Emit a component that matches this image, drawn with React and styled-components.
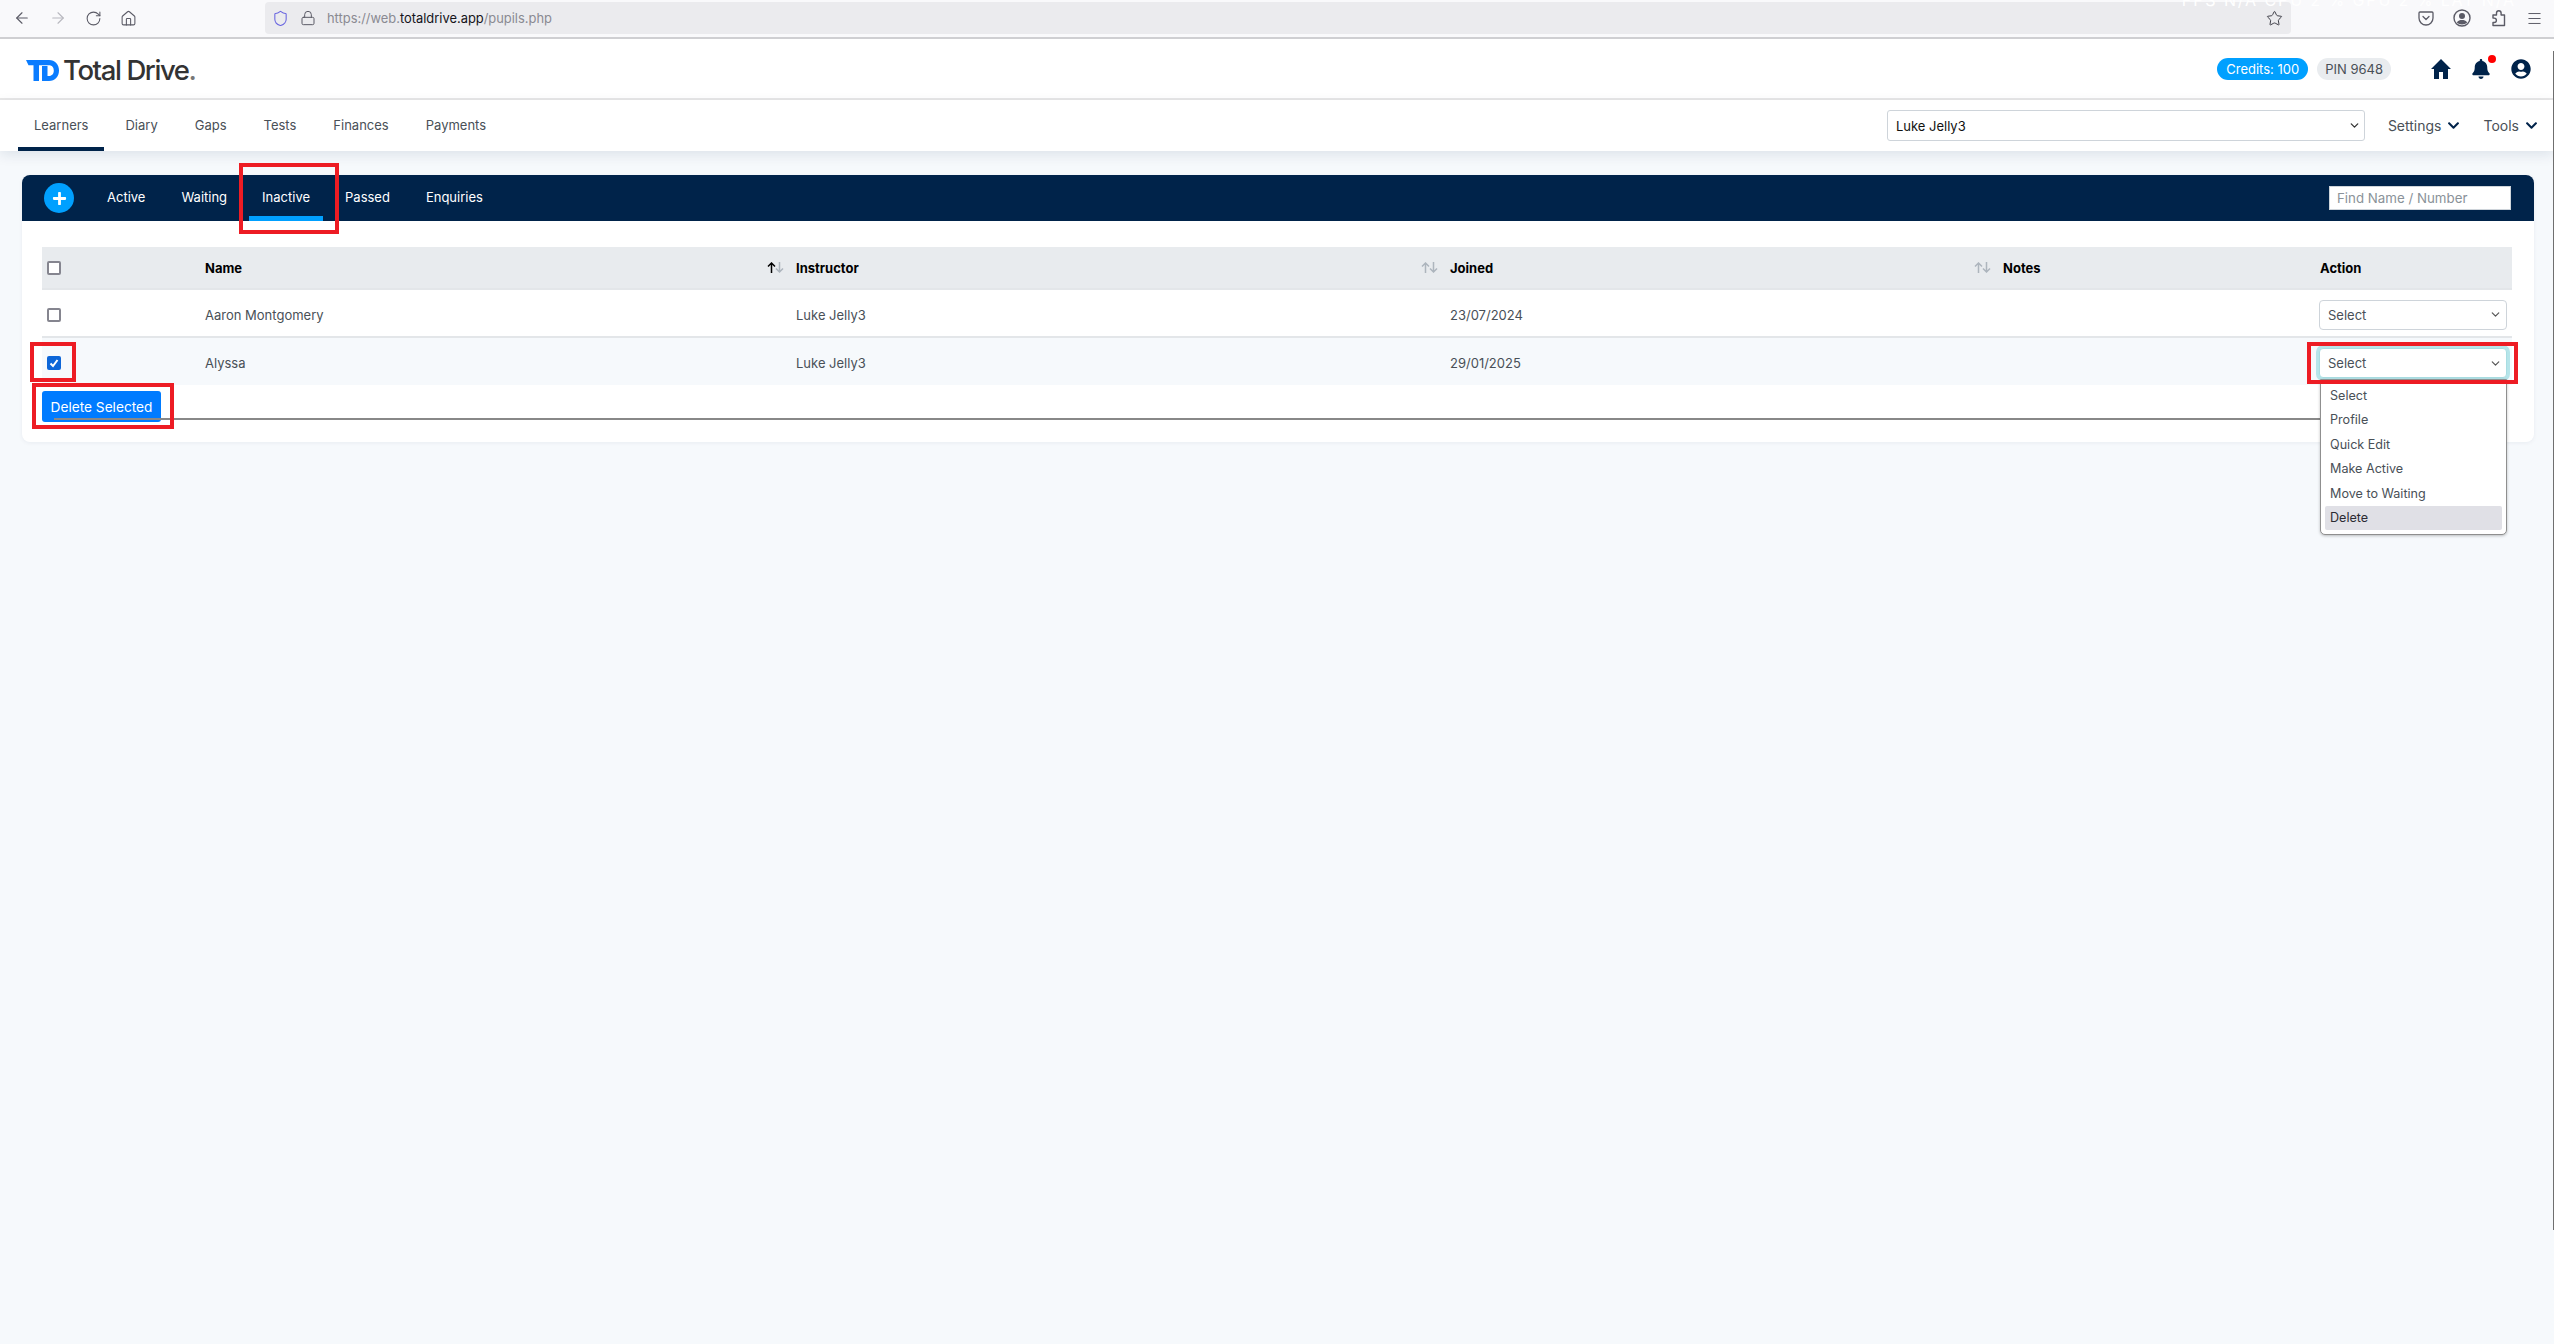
import React from "react";
import styled, { createGlobalStyle } from "styled-components";
import { ArrowLeft, ArrowRight, RotateCw, House, Shield, Lock, Star, Menu, ChevronDown } from "lucide-react";
import { FaBell, FaUserCircle, FaChevronDown, FaPlus } from "react-icons/fa";

const navy = "#00234a";
const sky = "#00a0ff";

const GlobalStyle = createGlobalStyle`
  html, body {
    margin: 0;
    height: 100%;
    overflow: hidden;
    background: #f6f9fc;
    font-family: Inter, "Noto Sans", sans-serif;
    font-size: 13px;
    color: #495057;
  }
  * { box-sizing: border-box; }
`;

const Page = styled.div`
  position: relative;
  height: 1344px;
  overflow: hidden;
`;

// Browser chrome
const BrowserBar = styled.div`
  position: relative;
  height: 39px;
  background: #f9f9fb;
  border-bottom: 2px solid #cfcfd2;
  display: flex;
  align-items: center;
  padding: 0 14px 1px 13px;
  color: #5b5b66;
`;

const BrowserButtons = styled.div`
  display: flex;
  align-items: center;
  gap: 18px;
  width: 252px;
  flex: none;
`;

const UrlBar = styled.div`
  width: 2026px;
  height: 32px;
  background: #ebebee;
  border-radius: 4px;
  display: flex;
  align-items: center;
  padding: 0 8px 0 7px;
  gap: 11px;
  flex: none;
`;

const UrlText = styled.div`
  flex: 1;
  font-size: 12.9px;
  color: #8a8a92;
  b { font-weight: 400; color: #15141a; }
`;

const BrowserTools = styled.div`
  display: flex;
  align-items: center;
  margin-left: 127px;
  gap: 19px;
`;

const HudText = styled.div`
  position: absolute;
  top: -10px;
  right: 38px;
  font-size: 16px;
  letter-spacing: 1.9px;
  color: #ffffff;
  white-space: nowrap;
`;

const ScrollEdge = styled.div`
  position: absolute;
  top: 51px;
  right: 0;
  height: 1179px;
  width: 1px;
  background: #6f6f6f;
`;

// App header
const TopBar = styled.header`
  height: 61px;
  background: #fff;
  border-bottom: 2px solid #e8e8e8;
  display: flex;
  align-items: center;
  padding: 0 23px 0 26px;
`;

const Logo = styled.div`
  display: flex;
  align-items: center;
  gap: 4px;
  padding-top: 4px;
`;

const LogoText = styled.span`
  font-size: 27.5px;
  line-height: 1;
  font-weight: 500;
  letter-spacing: -1.4px;
  color: #333;
  i { font-style: normal; color: #777; }
`;

const TopRight = styled.div`
  margin-left: auto;
  display: flex;
  align-items: center;
`;

const Pill = styled.span`
  height: 22px;
  padding: 0 ${p => p.$pad}px;
  border-radius: 11px;
  font-size: 13px;
  line-height: 22px;
  margin-right: ${p => (p.$primary ? 9 : 10)}px;
  background: ${p => (p.$primary ? sky : "#e9ecef")};
  color: ${p => (p.$primary ? "#fff" : "#495057")};
`;

const IconLink = styled.span`
  position: relative;
  display: flex;
  color: ${navy};
  font-size: ${p => p.$size || 20}px;
  margin-left: ${p => p.$gap}px;
`;

const RedDot = styled.span`
  position: absolute;
  top: -4px;
  right: -5px;
  width: 8px;
  height: 8px;
  border-radius: 50%;
  background: #f00;
`;

// Main nav
const NavBar = styled.nav`
  position: relative;
  height: 51px;
  background: #fff;
  box-shadow: 0 4px 12px rgba(0, 35, 74, 0.1);
  display: flex;
  align-items: stretch;
  padding: 0 16px 0 18px;
`;

const NavTab = styled.a`
  display: flex;
  align-items: center;
  padding: 3px 16px 0;
  margin-right: 5px;
  font-size: 13px;
  color: #495057;
  border-bottom: 4px solid ${p => (p.$active ? navy : "transparent")};
`;

const PupilSelect = styled.div`
  width: 478px;
  height: 31px;
  margin: 10px 0 0 auto;
  border: 1px solid #ced4da;
  border-radius: 3px;
  display: flex;
  align-items: center;
  justify-content: space-between;
  padding: 0 3px 0 8px;
  color: #111;
  font-size: 13px;
`;

const NavMenu = styled.a`
  display: flex;
  align-items: center;
  gap: 6px;
  height: 50px;
  margin-left: ${p => p.$gap}px;
  font-size: 14px;
  color: #495057;
  svg { color: ${navy}; }
`;

// Content
const Content = styled.main`
  padding: 24px 20px 0 22px;
`;

const Card = styled.section`
  background: #fff;
  border-radius: 8px;
  box-shadow: 0 1px 4px rgba(0, 35, 74, 0.06);
`;

const TabBar = styled.div`
  height: 46px;
  background: ${navy};
  border-radius: 8px 8px 0 0;
  display: flex;
  align-items: stretch;
  padding: 0 23px 0 22px;
`;

const AddButton = styled.span`
  width: 30px;
  height: 30px;
  margin: 8px 20px 0 0;
  border-radius: 50%;
  background: ${sky};
  color: #fff;
  display: flex;
  align-items: center;
  justify-content: center;
  font-size: 15px;
`;

const SubTab = styled.a`
  position: relative;
  display: flex;
  align-items: center;
  padding: 3px 13px 0;
  margin-right: ${p => p.$mr || 9}px;
  font-size: 13px;
  color: #fff;
  border-bottom: 5px solid ${p => (p.$active ? sky : "transparent")};
`;

const SearchBox = styled.div`
  width: 182px;
  height: 24px;
  margin: 11px 0 0 auto;
  background: #fff;
  border: 1px solid #ced4da;
  padding: 0 7px;
  font-size: 13.3px;
  line-height: 22px;
  color: #8a9299;
`;

const TableWrap = styled.div`
  padding: 26px 22px 20px 20px;
`;

const Row = styled.div`
  display: grid;
  grid-template-columns: 163px 591px 654px 553px 317px 192px;
  align-items: center;
  height: ${p => p.$h}px;
  padding-top: ${p => (p.$head ? 0 : 3)}px;
  background: ${p => p.$bg || "#fff"};
  border-bottom: ${p => (p.$flat ? "0" : "2px solid #e3e6e9")};
  font-weight: ${p => (p.$head ? 700 : 400)};
  color: ${p => (p.$head ? "#000" : "#495057")};
`;

const Cell = styled.div`
  position: relative;
  display: flex;
  align-items: center;
  justify-content: space-between;
  height: 100%;
  padding-left: ${p => p.$pl || 0}px;
  padding-right: 12px;
`;

const SortIcon = styled.svg`
  width: 17px;
  height: 11px;
  flex: none;
`;

const Check = styled.span`
  width: 14px;
  height: 14px;
  border-radius: 2px;
  display: flex;
  align-items: center;
  justify-content: center;
  border: ${p => (p.$on ? "0" : "2px solid #85858f")};
  background: ${p => (p.$on ? "#0d66d8" : "#fff")};
`;

const ActionSelect = styled.div`
  position: relative;
  flex: none;
  width: 188px;
  height: 30px;
  margin-left: -1px;
  border: 1px solid ${p => (p.$open ? "#a9dde2" : "#ced4da")};
  border-radius: 4px;
  background: #fff;
  display: flex;
  align-items: center;
  justify-content: space-between;
  padding: 0 4px 0 8px;
  box-shadow: ${p => (p.$open ? "0 0 0 3px #b6e5ea" : "none")};
  color: #495057;
  font-size: 13px;
`;

const Dropdown = styled.ul`
  position: absolute;
  z-index: 3;
  top: 30px;
  left: 0;
  width: 187px;
  height: 156px;
  margin: 0;
  padding: 4px;
  list-style: none;
  background: #fff;
  border: 1px solid #8f8f8f;
  border-radius: 0 0 5px 5px;
  box-shadow: 0 1px 3px rgba(0, 0, 0, 0.25);
`;

const DropItem = styled.li`
  height: 24.4px;
  line-height: 24px;
  padding-left: 5px;
  border-radius: 2px;
  font-size: 12.6px;
  background: ${p => (p.$hover ? "#e0e0e6" : "transparent")};
  color: ${p => (p.$hover ? "#2b2b33" : "#495057")};
`;

const Footer = styled.div`
  position: relative;
  height: 37px;
  padding-top: 6px;
`;

const DeleteButton = styled.button`
  position: relative;
  display: block;
  width: 119px;
  height: 31px;
  padding: 0;
  border: 0;
  border-radius: 3px;
  background: #007bff;
  color: #fff;
  font-family: inherit;
  font-size: 13.7px;
`;

const Rule = styled.div`
  position: absolute;
  z-index: 2;
  top: 33px;
  left: 12px;
  right: 8px;
  height: 2px;
  background: #888;
`;

const RedBox = styled.span`
  position: absolute;
  z-index: 4;
  pointer-events: none;
  border: 4px solid #ed1c24;
  top: ${p => p.$t}px;
  left: ${p => p.$l}px;
  width: ${p => p.$w}px;
  height: ${p => p.$h}px;
`;

const Sort = ({ up }) => (
  <SortIcon viewBox="0 0 17 11" fill="none" strokeWidth="1.5">
    <path d="M4.5 11V1M1 4.5 4.5 1 8 4.5" stroke={up ? "#000" : "#adb5bd"} />
    <path d="M12.5 0v10M9 6.5l3.5 3.5L16 6.5" stroke="#adb5bd" />
  </SortIcon>
);

const Tick = () => (
  <svg width="10" height="10" viewBox="0 0 10 10" fill="none" stroke="#fff" strokeWidth="2">
    <path d="M1.5 5.5 4 8l4.5-6" />
  </svg>
);

const LogoMark = () => (
  <svg width="33" height="21" viewBox="0 0 33 21" fill="#0a7cff">
    <path d="M0 0h23c6 0 10 4.4 10 10.5S29 21 23 21h-7V6h5.5v10H23c3 0 4.8-2.3 4.8-5.5S26 5.2 23 5.2H13V21H7.5V5.2H2.5Z" />
  </svg>
);

const HomeIcon = () => (
  <svg width="20" height="20" viewBox="0 0 20 20" fill="currentColor">
    <path d="M10 0 20 10H17V20H12V13H8V20H3V10H0Z" />
  </svg>
);

const PocketIcon = () => (
  <svg width="16" height="16" viewBox="0 0 16 16" fill="none" stroke="currentColor" strokeWidth="1.3" strokeLinecap="round" strokeLinejoin="round">
    <path d="M2 2h12a1 1 0 0 1 1 1v5a7 7 0 0 1-14 0V3a1 1 0 0 1 1-1z" />
    <path d="M5 6.5l3 3 3-3" />
  </svg>
);

const AccountIcon = () => (
  <svg width="18" height="18" viewBox="0 0 18 18" fill="currentColor">
    <circle cx="9" cy="9" r="8" fill="none" stroke="currentColor" strokeWidth="1.4" />
    <circle cx="9" cy="7" r="3" />
    <path d="M3.8 13.5C5 11.6 7 11 9 11s4 .6 5.2 2.5C13 14.8 11 15.5 9 15.5s-4-.7-5.2-2z" />
  </svg>
);

const PuzzleIcon = () => (
  <svg width="17" height="18" viewBox="0 0 17 18" fill="none" stroke="currentColor" strokeWidth="1.4" strokeLinejoin="round">
    <path d="M6.5 6V4a2.3 2.3 0 0 1 4.6 0v2h3.4v10.5H3v-3h1.2a2.2 2.2 0 0 0 0-4.4H3V6z" />
  </svg>
);

const tabs = ["Learners", "Diary", "Gaps", "Tests", "Finances", "Payments"];
const options = ["Select", "Profile", "Quick Edit", "Make Active", "Move to Waiting", "Delete"];

export default function App() {
  return (
    <Page>
      <GlobalStyle />

      <BrowserBar>
        <HudText>FPS N/A CPU 2 % GPU 2 % LAT N/A</HudText>
        <BrowserButtons>
          <ArrowLeft size={18} strokeWidth={1.5} />
          <ArrowRight size={18} strokeWidth={1.5} color="#b8b8bf" />
          <RotateCw size={17} strokeWidth={1.5} />
          <House size={17} strokeWidth={1.5} />
        </BrowserButtons>
        <UrlBar>
          <Shield size={17} strokeWidth={1.5} color="#6a66e0" />
          <Lock size={16} strokeWidth={1.5} />
          <UrlText>https://web.<b>totaldrive.app</b>/pupils.php</UrlText>
          <Star size={17} strokeWidth={1.4} color="#3f3f48" />
        </UrlBar>
        <BrowserTools>
          <PocketIcon />
          <AccountIcon />
          <PuzzleIcon />
          <Menu size={17} strokeWidth={1.4} />
        </BrowserTools>
      </BrowserBar>

      <TopBar>
        <Logo>
          <LogoMark />
          <LogoText>Total Drive<i>.</i></LogoText>
        </Logo>
        <TopRight>
          <Pill $primary $pad={9}>Credits: 100</Pill>
          <Pill $pad={8}>PIN 9648</Pill>
          <IconLink $gap={30}><HomeIcon /></IconLink>
          <IconLink $gap={20} $size={20}><FaBell /><RedDot /></IconLink>
          <IconLink $gap={20} $size={20}><FaUserCircle /></IconLink>
        </TopRight>
      </TopBar>

      <NavBar>
        {tabs.map((tab, i) => (
          <NavTab key={tab} $active={i === 0}>{tab}</NavTab>
        ))}
        <PupilSelect>
          Luke Jelly3
          <ChevronDown size={13} strokeWidth={2.4} color="#333" />
        </PupilSelect>
        <NavMenu $gap={23}>Settings <FaChevronDown size={13} /></NavMenu>
        <NavMenu $gap={23}>Tools <FaChevronDown size={13} /></NavMenu>
      </NavBar>

      <Content>
        <Card>
          <TabBar>
            <AddButton><FaPlus /></AddButton>
            <SubTab $mr={10}>Active</SubTab>
            <SubTab>Waiting</SubTab>
            <SubTab $active>
              Inactive
              <RedBox $t={-12} $l={-10} $w={100} $h={71} />
            </SubTab>
            <SubTab $mr={10}>Passed</SubTab>
            <SubTab>Enquiries</SubTab>
            <SearchBox>Find Name / Number</SearchBox>
          </TabBar>

          <TableWrap>
            <Row $head $h={43} $bg="#e8ebee">
              <Cell $pl={5}><Check /></Cell>
              <Cell>Name <Sort up /></Cell>
              <Cell>Instructor <Sort /></Cell>
              <Cell>Joined <Sort /></Cell>
              <Cell>Notes</Cell>
              <Cell>Action</Cell>
            </Row>
            <Row $h={48}>
              <Cell $pl={5}><Check /></Cell>
              <Cell>Aaron Montgomery</Cell>
              <Cell>Luke Jelly3</Cell>
              <Cell>23/07/2024</Cell>
              <Cell />
              <Cell>
                <ActionSelect>
                  Select
                  <ChevronDown size={13} strokeWidth={2.2} color="#555" />
                </ActionSelect>
              </Cell>
            </Row>
            <Row $h={47} $bg="#f6f9fc" $flat>
              <Cell $pl={5}>
                <Check $on><Tick /></Check>
                <RedBox $t={1} $l={-12} $w={46} $h={40} />
              </Cell>
              <Cell>Alyssa</Cell>
              <Cell>Luke Jelly3</Cell>
              <Cell>29/01/2025</Cell>
              <Cell />
              <Cell>
                <ActionSelect $open>
                  Select
                  <ChevronDown size={13} strokeWidth={2.2} color="#555" />
                  <Dropdown>
                    {options.map(option => (
                      <DropItem key={option} $hover={option === "Delete"}>{option}</DropItem>
                    ))}
                  </Dropdown>
                </ActionSelect>
                <RedBox $t={1} $l={-13} $w={211} $h={42} />
              </Cell>
            </Row>
            <Footer>
              <DeleteButton>Delete Selected</DeleteButton>
              <Rule />
              <RedBox $t={-2} $l={-10} $w={142} $h={46} />
            </Footer>
          </TableWrap>
        </Card>
      </Content>

      <ScrollEdge />
    </Page>
  );
}
